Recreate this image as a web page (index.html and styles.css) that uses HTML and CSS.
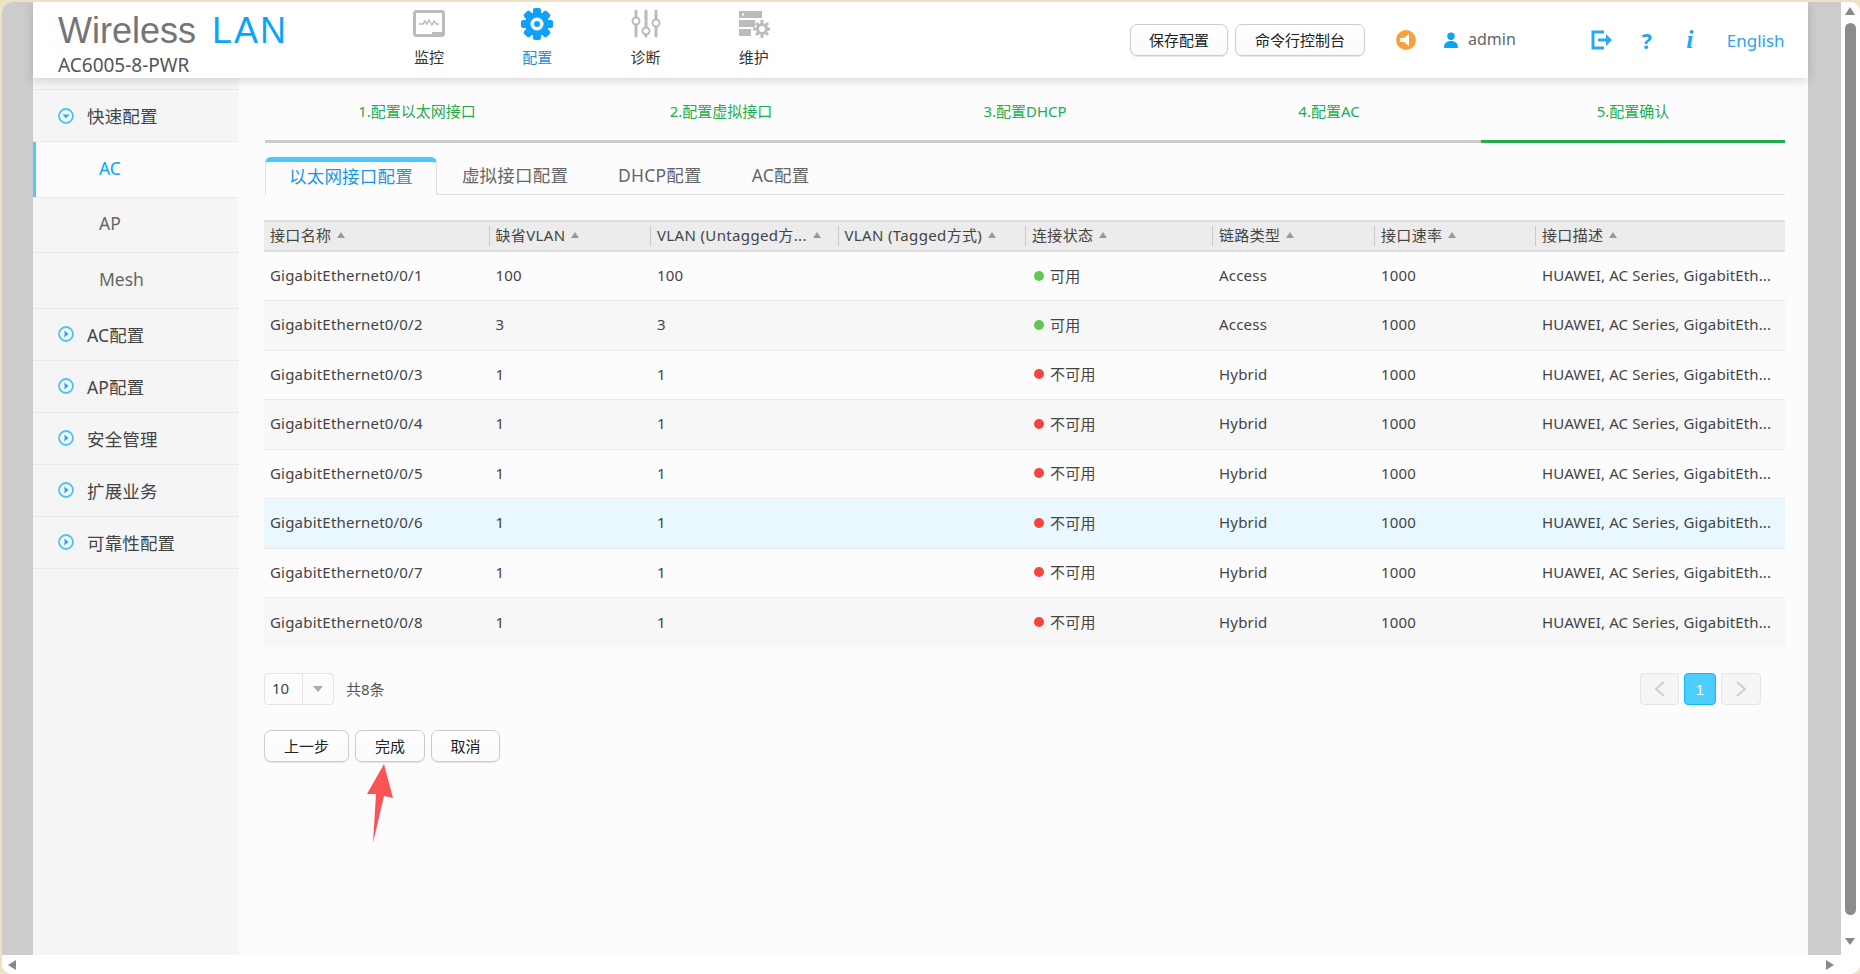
FILE: index.html
```html
<!DOCTYPE html>
<html lang="zh-CN">
<head>
<meta charset="utf-8">
<title>Wireless LAN</title>
<link rel="stylesheet" href="styles.css">
</head>
<body>
<div class="window">
  <div class="view">
    <div class="gutter gutter-left"></div>
    <div class="app">
      <header class="header">
        <div class="logo">
          <div class="logo-title">Wireless <span class="logo-lan">LAN</span></div>
          <div class="logo-model">AC6005-8-PWR</div>
        </div>
        <nav class="nav">
          <div class="nav-item">
            <svg class="nav-icon" viewBox="0 0 32 32"><rect x="1.5" y="3.5" width="29" height="24" rx="2" fill="none" stroke="#bbb" stroke-width="3"/><path d="M6 16h4l2-3 2 3 2-4 3 5 2-4 2 3h3" fill="none" stroke="#bbb" stroke-width="1.4"/><path d="M19 27v-3h11v3z" fill="#bbb"/></svg>
            <span class="nav-label">监控</span>
          </div>
          <div class="nav-item nav-item-active">
            <svg class="nav-icon" viewBox="0 0 32 32"><g fill="#0fa0fb"><rect x="12" y="0" width="8" height="32" rx="2"/><rect x="12" y="0" width="8" height="32" rx="2" transform="rotate(45 16 16)"/><rect x="12" y="0" width="8" height="32" rx="2" transform="rotate(90 16 16)"/><rect x="12" y="0" width="8" height="32" rx="2" transform="rotate(135 16 16)"/><circle cx="16" cy="16" r="12"/></g><circle cx="16" cy="16" r="6.5" fill="#fff"/><circle cx="16" cy="16" r="3" fill="#0fa0fb"/></svg>
            <span class="nav-label">配置</span>
          </div>
          <div class="nav-item">
            <svg class="nav-icon" viewBox="0 0 32 32"><g stroke="#bbb" stroke-width="3" stroke-linecap="round"><path d="M6 3v25M16 3v25M26 3v25"/></g><g fill="#fff" stroke="#bbb" stroke-width="2"><circle cx="6" cy="13" r="3.5"/><circle cx="16" cy="23" r="3.5"/><circle cx="26" cy="15" r="3.5"/></g></svg>
            <span class="nav-label">诊断</span>
          </div>
          <div class="nav-item">
            <svg class="nav-icon" viewBox="0 0 32 32"><g fill="#bbb"><rect x="1" y="3" width="23" height="7"/><rect x="1" y="12" width="16" height="7"/><rect x="1" y="21" width="12" height="7"/><circle cx="24" cy="21" r="6"/><g stroke="#bbb" stroke-width="3"><path d="M24 12v18M15 21h18M18 15l12 12M30 15l-12 12"/></g></g><rect x="4" y="5.5" width="2" height="2" fill="#fff"/><circle cx="24" cy="21" r="3" fill="#fff"/></svg>
            <span class="nav-label">维护</span>
          </div>
        </nav>
        <div class="head-right">
          <button class="btn btn-save">保存配置</button>
          <button class="btn btn-cli">命令行控制台</button>
          <svg class="ico-speaker" viewBox="0 0 20 20"><circle cx="10" cy="10" r="10" fill="#f9a03c"/><path d="M4 8h4l5-4v12l-5-4H4z" fill="#fff"/></svg>
          <svg class="ico-user" viewBox="0 0 16 16"><circle cx="8" cy="4.2" r="3.7" fill="#0aa5f5"/><path d="M1 16c0-5 2.500-7 7-7s7 2 7 7z" fill="#0aa5f5"/></svg>
          <span class="admin">admin</span>
          <svg class="ico-logout" viewBox="0 0 22 20"><path d="M13 2H2v16h11" fill="none" stroke="#2aa8f2" stroke-width="3"/><path d="M7 8.500h8V4l6 6-6 6v-4.500H7z" fill="#2aa8f2"/></svg>
          <span class="ico-help">?</span>
          <span class="ico-info">i</span>
          <span class="lang">English</span>
        </div>
      </header>
      <div class="body">
        <aside class="side">
          <div class="menu menu-open"><svg class="menu-ico" viewBox="0 0 16 16"><circle cx="8" cy="8" r="7" fill="none" stroke="#4cc4f8" stroke-width="1.800"/><path d="M4.500 6.500h7L8 10.500z" fill="#2aa8f2"/></svg>快速配置</div>
          <div class="sub sub-active">AC</div>
          <div class="sub">AP</div>
          <div class="sub">Mesh</div>
          <div class="menu"><svg class="menu-ico" viewBox="0 0 16 16"><circle cx="8" cy="8" r="7" fill="none" stroke="#4cc4f8" stroke-width="1.800"/><path d="M6.500 4.500v7l4-3.500z" fill="#2aa8f2"/></svg>AC配置</div>
          <div class="menu"><svg class="menu-ico" viewBox="0 0 16 16"><circle cx="8" cy="8" r="7" fill="none" stroke="#4cc4f8" stroke-width="1.800"/><path d="M6.500 4.500v7l4-3.500z" fill="#2aa8f2"/></svg>AP配置</div>
          <div class="menu"><svg class="menu-ico" viewBox="0 0 16 16"><circle cx="8" cy="8" r="7" fill="none" stroke="#4cc4f8" stroke-width="1.800"/><path d="M6.500 4.500v7l4-3.500z" fill="#2aa8f2"/></svg>安全管理</div>
          <div class="menu"><svg class="menu-ico" viewBox="0 0 16 16"><circle cx="8" cy="8" r="7" fill="none" stroke="#4cc4f8" stroke-width="1.800"/><path d="M6.500 4.500v7l4-3.500z" fill="#2aa8f2"/></svg>扩展业务</div>
          <div class="menu"><svg class="menu-ico" viewBox="0 0 16 16"><circle cx="8" cy="8" r="7" fill="none" stroke="#4cc4f8" stroke-width="1.800"/><path d="M6.500 4.500v7l4-3.500z" fill="#2aa8f2"/></svg>可靠性配置</div>
        </aside>
        <main class="main">
          <div class="steps">
            <div class="step">1.配置以太网接口</div>
            <div class="step">2.配置虚拟接口</div>
            <div class="step">3.配置DHCP</div>
            <div class="step">4.配置AC</div>
            <div class="step step-active">5.配置确认</div>
          </div>
          <div class="tabs">
            <div class="tab tab-active">以太网接口配置</div>
            <div class="tab">虚拟接口配置</div>
            <div class="tab">DHCP配置</div>
            <div class="tab">AC配置</div>
          </div>
          <table class="grid">
            <colgroup>
              <col class="c1"><col class="c2"><col class="c3"><col class="c4"><col class="c5"><col class="c6"><col class="c7"><col class="c8">
            </colgroup>
            <thead>
              <tr>
                <th><div class="th"><span class="th-text">接口名称</span><i class="sort"></i></div></th>
                <th><div class="th"><span class="th-text">缺省VLAN</span><i class="sort"></i></div></th>
                <th><div class="th"><span class="th-text">VLAN (Untagged方...</span><i class="sort"></i></div></th>
                <th><div class="th"><span class="th-text">VLAN (Tagged方式)</span><i class="sort"></i></div></th>
                <th><div class="th"><span class="th-text">连接状态</span><i class="sort"></i></div></th>
                <th><div class="th"><span class="th-text">链路类型</span><i class="sort"></i></div></th>
                <th><div class="th"><span class="th-text">接口速率</span><i class="sort"></i></div></th>
                <th><div class="th"><span class="th-text">接口描述</span><i class="sort"></i></div></th>
              </tr>
            </thead>
            <tbody>
              <tr><td>GigabitEthernet0/0/1</td><td>100</td><td>100</td><td></td><td class="st"><i class="dot dot-on"></i>可用</td><td>Access</td><td>1000</td><td class="desc">HUAWEI, AC Series, GigabitEth...</td></tr>
              <tr><td>GigabitEthernet0/0/2</td><td>3</td><td>3</td><td></td><td class="st"><i class="dot dot-on"></i>可用</td><td>Access</td><td>1000</td><td class="desc">HUAWEI, AC Series, GigabitEth...</td></tr>
              <tr><td>GigabitEthernet0/0/3</td><td>1</td><td>1</td><td></td><td class="st"><i class="dot dot-off"></i>不可用</td><td>Hybrid</td><td>1000</td><td class="desc">HUAWEI, AC Series, GigabitEth...</td></tr>
              <tr><td>GigabitEthernet0/0/4</td><td>1</td><td>1</td><td></td><td class="st"><i class="dot dot-off"></i>不可用</td><td>Hybrid</td><td>1000</td><td class="desc">HUAWEI, AC Series, GigabitEth...</td></tr>
              <tr><td>GigabitEthernet0/0/5</td><td>1</td><td>1</td><td></td><td class="st"><i class="dot dot-off"></i>不可用</td><td>Hybrid</td><td>1000</td><td class="desc">HUAWEI, AC Series, GigabitEth...</td></tr>
              <tr class="row-hover"><td>GigabitEthernet0/0/6</td><td>1</td><td>1</td><td></td><td class="st"><i class="dot dot-off"></i>不可用</td><td>Hybrid</td><td>1000</td><td class="desc">HUAWEI, AC Series, GigabitEth...</td></tr>
              <tr><td>GigabitEthernet0/0/7</td><td>1</td><td>1</td><td></td><td class="st"><i class="dot dot-off"></i>不可用</td><td>Hybrid</td><td>1000</td><td class="desc">HUAWEI, AC Series, GigabitEth...</td></tr>
              <tr><td>GigabitEthernet0/0/8</td><td>1</td><td>1</td><td></td><td class="st"><i class="dot dot-off"></i>不可用</td><td>Hybrid</td><td>1000</td><td class="desc">HUAWEI, AC Series, GigabitEth...</td></tr>
            </tbody>
          </table>
          <div class="pager">
            <div class="size"><span class="size-val">10</span><span class="size-arrow"><i class="caret"></i></span></div>
            <span class="total">共8条</span>
            <div class="pages">
              <div class="page page-nav"><svg viewBox="0 0 12 16"><path d="M10 1 2 8l8 7" fill="none" stroke="#ccc" stroke-width="1.800"/></svg></div>
              <div class="page page-on">1</div>
              <div class="page page-nav page-next"><svg viewBox="0 0 12 16"><path d="m2 1 8 7-8 7" fill="none" stroke="#ccc" stroke-width="1.800"/></svg></div>
            </div>
          </div>
          <div class="actions">
            <button class="btn btn-prev">上一步</button>
            <button class="btn btn-done">完成</button>
            <button class="btn btn-cancel">取消</button>
          </div>
          <svg class="mark-arrow" viewBox="0 0 28 80"><path d="M18 0 1 30h9L7 79l11-47 9 2z" fill="#fb5457"/></svg>
        </main>
      </div>
    </div>
    <div class="gutter gutter-right"></div>
    <div class="vbar">
      <i class="arr arr-up"></i>
      <div class="vthumb"></div>
      <i class="arr arr-down"></i>
    </div>
  </div>
  <div class="hbar"><i class="arr arr-left"></i><i class="arr arr-right"></i></div>
</div>
</body>
</html>
```

FILE: styles.css
```css
* { box-sizing: border-box; }
html, body { margin: 0; height: 100%; }
body {
  background: #ede2c6;
  padding: 2px 0 0 2px;
  overflow: hidden;
  font-family: "Noto Sans", "Noto Sans CJK SC", sans-serif;
  font-size: 15px;
  color: #444;
}
.window {
  height: 972px;
  display: flex;
  flex-direction: column;
  background: #fff;
  border-radius: 10px;
  overflow: hidden;
}
.view { display: flex; height: 953px; }
.gutter { background: #ccc; }
.gutter-left { width: 31px; }
.gutter-right { width: 33px; }
.app { width: 1775px; display: flex; flex-direction: column; background: #fcfcfc; }

/* header */
.header {
  height: 76px;
  flex: none;
  background: #fff;
  display: flex;
  position: relative;
  z-index: 2;
  box-shadow: 0 2px 10px rgba(0, 0, 0, .16);
}
.logo { width: 342px; padding-left: 25px; }
.logo-title {
  font-family: "Liberation Sans", sans-serif;
  font-size: 36px;
  line-height: 40px;
  margin-top: 9px;
  color: #757575;
  word-spacing: 6px;
}
.logo-lan { color: #0aa5fb; letter-spacing: 2px; }
.logo-model { font-size: 19px; line-height: 22px; color: #555; margin-top: 3px; }
.nav { display: flex; width: 433px; }
.nav-item { width: 108.500px; display: flex; flex-direction: column; align-items: center; color: #333; }
.nav-item-active { color: #1b8fd8; }
.nav-icon { width: 32px; height: 32px; margin-top: 6px; }
.nav-label { line-height: 20px; margin-top: 7px; }
.head-right { display: flex; align-items: center; flex: 1; padding-left: 322px; height: 76px; }
.btn {
  font: inherit;
  color: #222;
  height: 32px;
  padding: 0 0 2px;
  border: 1px solid #ccc;
  border-radius: 7px;
  background: linear-gradient(#fff, #fafafa);
  box-shadow: 0 1px 1px rgba(0, 0, 0, .1);
}
.btn-save { width: 98px; }
.btn-cli { width: 130px; margin-left: 7px; }
.ico-speaker { width: 20px; height: 20px; margin-left: 31px; }
.ico-user { width: 16px; height: 16px; margin-left: 27px; }
.admin { margin: 0 0 3px 9px; font-size: 16px; color: #666; }
.ico-logout { width: 22px; height: 20px; margin-left: 75px; }
.ico-help { margin-left: 26px; width: 16px; text-align: center; font-size: 22px; font-weight: 700; color: #1ea7f5; line-height: 24px; }
.ico-info { margin-left: 29px; width: 12px; text-align: center; font-family: "Liberation Serif", serif; font-style: italic; font-weight: 700; font-size: 26px; color: #1ea7f5; line-height: 24px; }
.lang { margin-left: 31px; font-size: 17px; color: #2aa3ee; }

/* body */
.body { flex: 1; display: flex; min-height: 0; position: relative; }
.side { width: 206px; background: #f5f5f5; padding-top: 11px; flex: none; }
.menu {
  height: 52px;
  display: flex;
  align-items: center;
  padding-left: 25px;
  font-size: 17.500px;
  letter-spacing: .15px;
  color: #444;
  border-top: 1px solid #e9e9e9;
}
.menu + .menu:last-child { box-shadow: 0 1px 0 #e9e9e9; }
.menu-ico { width: 16px; height: 16px; margin-right: 13px; }
.sub {
  height: 55.500px;
  display: flex;
  align-items: center;
  padding: 0 0 3px 66px;
  font-size: 17.500px;
  color: #666;
  border-top: 1px solid #e9e9e9;
}
.sub-active { background: #fcfcfc; color: #0aa5fb; box-shadow: inset 3px 0 0 #4cc8ff; }
.main { flex: 1; padding: 0 23px 0 25px; min-width: 0; }

/* steps */
.steps { display: flex; height: 65px; margin-left: 1px; }
.step {
  flex: 1;
  text-align: center;
  color: #22ac4f;
  padding-top: 22px;
  line-height: 22px;
  border-bottom: 3px solid #ccc;
}
.step-active { border-bottom-color: #22ac4f; }

/* tabs */
.tabs { display: flex; height: 38px; margin-top: 14px; border-bottom: 1px solid #ddd; margin-left: 1px; }
.tab { padding: 0 25px; line-height: 37px; font-size: 17.500px; letter-spacing: .2px; color: #666; }
.tab-active {
  color: #1b96e6;
  background: #fcfcfc;
  height: 38px;
  line-height: 28px;
  border: 1px solid #ddd;
  border-top: 5px solid #4cc8ff;
  border-bottom: 0;
  border-radius: 6px 6px 0 0;
  padding: 0 23px;
}

/* table */
.grid { width: 1521px; table-layout: fixed; border-collapse: collapse; margin-top: 25px; letter-spacing: .2px; }
.c1 { width: 224.500px; } .c2 { width: 161.500px; } .c3 { width: 187.500px; } .c4 { width: 187.500px; }
.c5 { width: 187px; } .c6 { width: 162px; } .c7 { width: 161px; } .c8 { width: 250px; }
.grid thead tr { height: 30px; background: #ececec; border-top: 2px solid #ddd; border-bottom: 2px solid #ddd; }
.grid th { padding: 0; font-weight: 400; text-align: left; }
.th { display: flex; align-items: center; height: 20px; padding-left: 6px; border-left: 1px solid #c9c9c9; color: #444; line-height: 20px; letter-spacing: .35px; }
.grid th:first-child .th { border-left: 0; }
.th-text { white-space: nowrap; margin-top: -2px; }
.sort { width: 0; height: 0; margin: -2px 0 0 6px; border: 4.500px solid transparent; border-top: 0; border-bottom: 6px solid #999; flex: none; }
.grid tbody tr { height: 49.500px; border-bottom: 1px solid #eaeaea; }
.grid tbody tr:nth-child(even) { background: #f7f7f7; }
.grid tbody tr:last-child { border-bottom: 0; }
.grid tbody tr.row-hover { background: #e9f7fe; }
.grid td { padding: 0 7px 2px; white-space: nowrap; color: #444; }
.grid td:first-child { padding-left: 6px; }
.grid td.st { padding-left: 9px; }
.grid td.desc { letter-spacing: .12px; }
.dot { display: inline-block; width: 10px; height: 10px; border-radius: 50%; margin-right: 6px; vertical-align: 1px; }
.dot-on { background: #5fc84f; }
.dot-off { background: #f8443e; }

/* pager */
.pager { display: flex; align-items: center; height: 32px; margin-top: 26px; width: 1497px; }
.size { display: flex; width: 70px; height: 32px; border: 1px solid #e3e3e3; border-radius: 4px; }
.size-val { width: 37px; padding-left: 7px; line-height: 28px; }
.size-arrow { flex: 1; border-left: 1px solid #e3e3e3; display: flex; align-items: center; justify-content: center; }
.caret { width: 0; height: 0; border: 5.500px solid transparent; border-bottom: 0; border-top: 6px solid #aaa; }
.total { margin: 0 0 2px 12px; color: #555; }
.pages { display: flex; margin-left: auto; }
.page { height: 32px; border-radius: 4px; display: flex; align-items: center; justify-content: center; }
.page-nav { width: 39px; background: #f5f5f5; border: 1px solid #e5e5e5; }
.page-nav svg { width: 12px; height: 16px; }
.page-next { width: 40px; }
.page-on { width: 32px; margin: 0 5px; background: #4bcdff; border: 1px solid #19b4f5; color: #fff; font-family: "Liberation Sans", sans-serif; }

/* actions */
.actions { display: flex; gap: 6px; margin-top: 25px; }
.btn-prev { width: 85px; }
.btn-done { width: 70px; }
.btn-cancel { width: 69px; }
.mark-arrow { position: absolute; left: 333px; top: 686px; width: 28px; height: 80px; }

/* browser scrollbars */
.vbar { width: 19px; background: #fff; display: flex; flex-direction: column; align-items: center; position: relative; }
.vthumb { width: 11px; height: 892px; margin-top: 21px; background: #8c8c8c; border-radius: 6px; margin-left: -1px; }
.hbar { height: 19px; background: #fff; position: relative; }
.arr { position: absolute; width: 0; height: 0; border: 5px solid transparent; }
.arr-up { top: 5px; left: 4px; border-top: 0; border-bottom: 8px solid #888; }
.arr-down { top: 936px; left: 4px; border-bottom: 0; border-top: 7px solid #888; }
.arr-left { left: 6px; top: 5px; border-left: 0; border-right: 8px solid #888; }
.arr-right { left: 1824px; top: 5px; border-right: 0; border-left: 8px solid #888; }
```
